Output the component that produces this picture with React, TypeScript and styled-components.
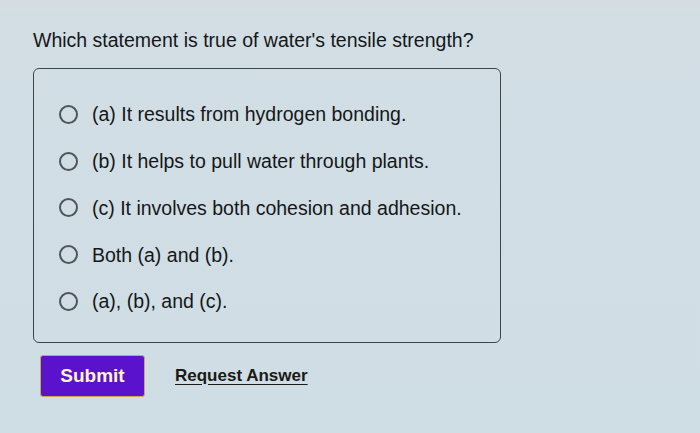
import React from "react";
import styled, { createGlobalStyle } from "styled-components";

const GlobalStyle = createGlobalStyle`
  html, body {
    margin: 0;
    padding: 0;
    background: #cfdde4;
  }
  body {
    font-family: "Liberation Sans", Arial, Helvetica, sans-serif;
    color: #151719;
  }
`;

const Page = styled.div`
  width: 700px;
  height: 433px;
  box-sizing: border-box;
  padding: 28px 0 0 33px;
  display: flex;
  flex-direction: column;
  background: linear-gradient(180deg, #d6dde1 0px, #d2dee4 16px, #cfdde5 100%);
`;

const Question = styled.h1`
  margin: 0;
  font-size: 19.5px;
  line-height: 24px;
  font-weight: 400;
  color: #151719;
`;

const Choices = styled.div`
  margin-top: 16px;
  width: 468px;
  height: 275px;
  box-sizing: border-box;
  border: 1.5px solid #3e4549;
  border-radius: 6px;
  padding: 22px 0 0 25px;
  display: flex;
  flex-direction: column;
`;

const Choice = styled.label`
  height: 46.75px;
  display: flex;
  align-items: center;
  gap: 14px;
  font-size: 19.5px;
  line-height: 24px;
  color: #151719;
  cursor: pointer;
`;

const Radio = styled.span`
  width: 19px;
  height: 19px;
  box-sizing: border-box;
  border: 2px solid #4f5558;
  border-radius: 50%;
  flex: none;
  background: transparent;
`;

const Actions = styled.div`
  margin-top: 12px;
  margin-left: 7px;
  display: flex;
  align-items: center;
  gap: 30px;
`;

const SubmitButton = styled.button`
  width: 105px;
  height: 42px;
  box-sizing: border-box;
  background: #5a12cc;
  border: 1.5px solid #c9a85a;
  border-radius: 3px;
  color: #fff4cc;
  font-family: "Liberation Sans", Arial, sans-serif;
  font-weight: 700;
  font-size: 19px;
  padding: 0;
  cursor: pointer;
`;

const RequestLink = styled.a`
  font-weight: 700;
  font-size: 17px;
  color: #1b1a16;
  text-decoration: underline;
  text-underline-offset: 3px;
  cursor: pointer;
`;

const options = [
  "(a) It results from hydrogen bonding.",
  "(b) It helps to pull water through plants.",
  "(c) It involves both cohesion and adhesion.",
  "Both (a) and (b).",
  "(a), (b), and (c).",
];

export default function App() {
  return (
    <>
      <GlobalStyle />
      <Page>
        <Question>Which statement is true of water's tensile strength?</Question>
        <Choices>
          {options.map((text) => (
            <Choice key={text}>
              <Radio />
              <span>{text}</span>
            </Choice>
          ))}
        </Choices>
        <Actions>
          <SubmitButton>Submit</SubmitButton>
          <RequestLink>Request Answer</RequestLink>
        </Actions>
      </Page>
    </>
  );
}
